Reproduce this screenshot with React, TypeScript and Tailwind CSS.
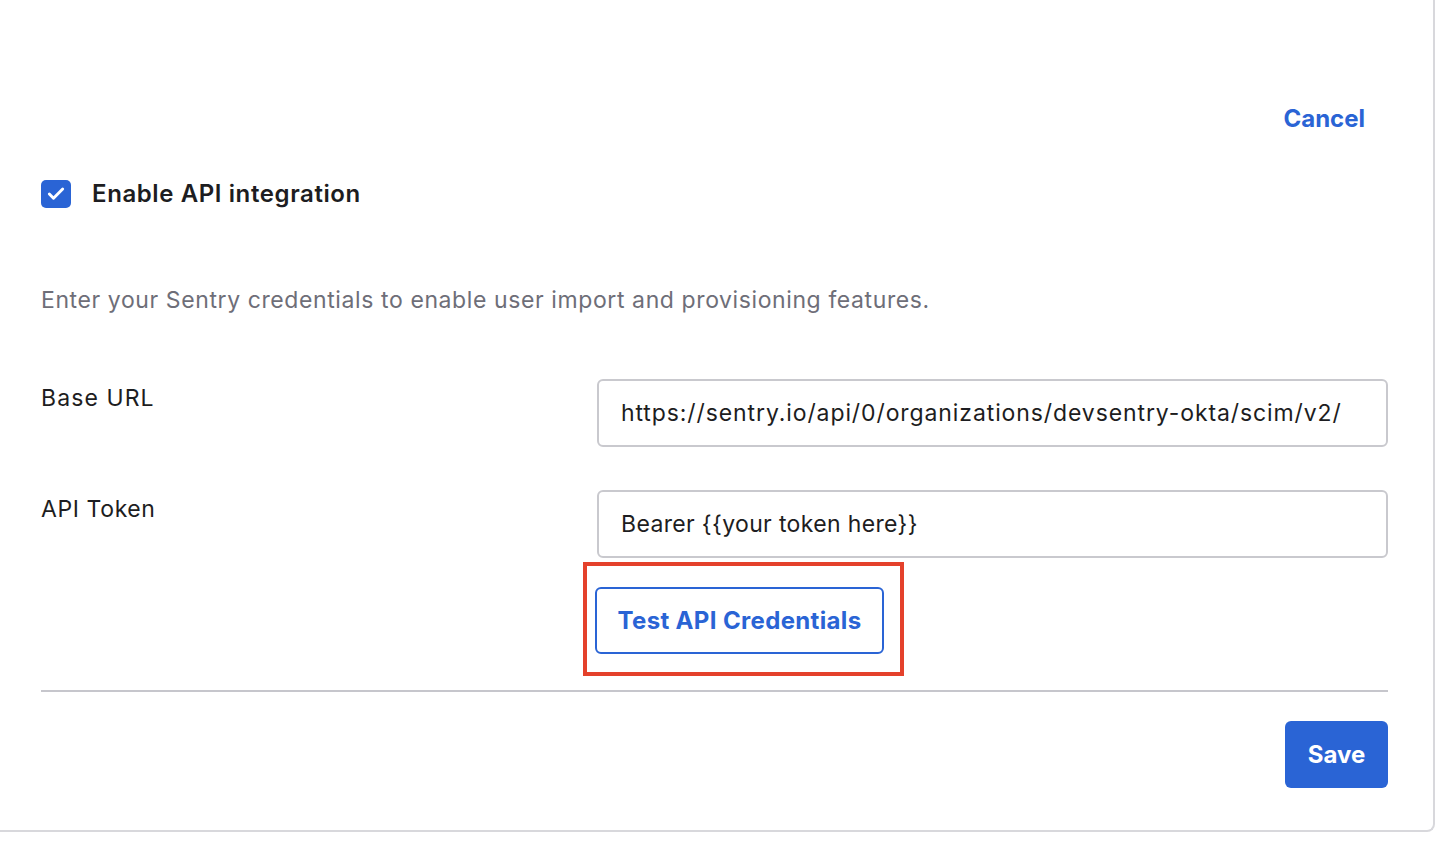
import { Check } from 'lucide-react';

const font = { fontFamily: 'Inter, "Noto Sans", sans-serif' };

function Field({ label, value, top, labelTrack, valueTrack }: { label: string; value: string; top: string; labelTrack: string; valueTrack: string }) {
  return (
    <div className={`flex ${top}`}>
      <div className={`w-[556px] shrink-0 pt-[4px] text-[23px] leading-[30px] text-[#1d1d21] ${labelTrack}`}>{label}</div>
      <div className={`flex h-[68px] w-[791px] items-center rounded-md border-2 border-[#c9c9ce] px-[22px] text-[23px] text-[#1d1d21] ${valueTrack}`}>
        {value}
      </div>
    </div>
  );
}

export default function App() {
  return (
    <div className="h-[857px] w-[1443px] bg-white" style={font}>
      <div className="h-[832px] w-[1435px] rounded-br-lg border-r-2 border-b-2 border-[#d8d8dc] pl-[41px]">
        <div className="flex w-[1347px] justify-end pt-[104px] pr-[23px]">
          <button className="text-[24px] leading-[30px] font-bold text-[#2a64d5]">Cancel</button>
        </div>

        <div className="mt-[45px] flex items-center gap-[21px]">
          <div className="flex h-[28px] w-[30px] items-center justify-center rounded-[5px] bg-[#2a64d5]">
            <Check className="h-[20px] w-[20px] text-white" strokeWidth={3.5} />
          </div>
          <span className="text-[24px] leading-[30px] font-semibold tracking-[0.6px] text-[#1d1d21]">Enable API integration</span>
        </div>

        <p className="mt-[76px] text-[23px] leading-[30px] tracking-[0.6px] text-[#6e6e78]">
          Enter your Sentry credentials to enable user import and provisioning features.
        </p>

        <Field
          label="Base URL"
          value="https://sentry.io/api/0/organizations/devsentry-okta/scim/v2/"
          top="mt-[64px]"
          labelTrack="tracking-[1.1px]"
          valueTrack="tracking-[0.9px]"
        />
        <Field
          label="API Token"
          value="Bearer {{your token here}}"
          top="mt-[43px]"
          labelTrack="tracking-[0.6px]"
          valueTrack="tracking-[0.35px]"
        />

        <div className="mt-[4px] ml-[542px] w-[321px] border-4 border-[#e4412b] pt-[21px] pb-[18px] pl-[8px]">
          <button className="flex h-[67px] w-[289px] items-center justify-center rounded-md border-2 border-[#2a64d5] text-[24px] font-bold tracking-[0.35px] text-[#2a64d5]">
            Test API Credentials
          </button>
        </div>

        <div className="mt-[14px] h-[2px] w-[1347px] bg-[#c6c6cc]" />

        <div className="mt-[29px] flex w-[1347px] justify-end">
          <button className="h-[67px] w-[103px] rounded-md bg-[#2a64d5] text-[24px] font-bold text-white">Save</button>
        </div>
      </div>
    </div>
  );
}
